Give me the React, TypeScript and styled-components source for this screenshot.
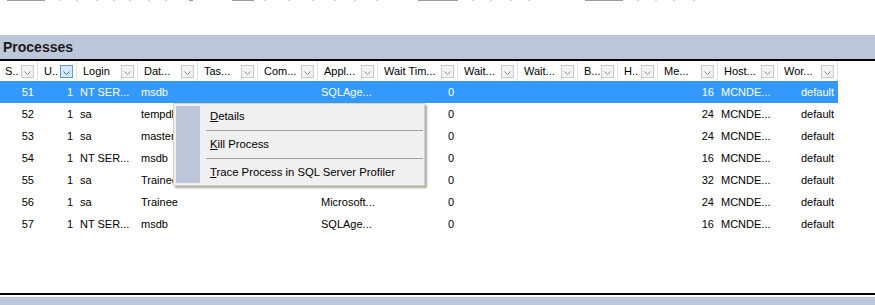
import styled, { createGlobalStyle } from 'styled-components';

const GlobalStyle = createGlobalStyle`
  html, body {
    margin: 0;
    padding: 0;
    background: #fff;
  }
  body {
    font-family: 'Liberation Sans', Arial, sans-serif;
  }
`;

const Page = styled.div`
  width: 875px;
  height: 305px;
  display: flex;
  flex-direction: column;
  overflow: hidden;
  background: #fff;
`;

const TopStrip = styled.div`
  height: 4px;
  display: flex;
  align-items: flex-start;
  overflow: hidden;
`;

const Mark = styled.span<{ $w: number; $gap: number; $dark?: boolean }>`
  width: ${(p) => p.$w}px;
  height: 1px;
  margin-left: ${(p) => p.$gap}px;
  background: ${(p) => (p.$dark ? '#9c9c9c' : '#d4d4d4')};
  flex: none;
`;

const TitleBar = styled.div`
  margin-top: 31px;
  height: 24px;
  padding-left: 3px;
  display: flex;
  align-items: center;
  background: #bcc8d9;
  border-bottom: 2px solid #000;
  font-size: 14px;
  font-weight: bold;
  color: #1b1b1b;
`;

const GridArea = styled.div`
  position: relative;
  height: 232px;
  flex: none;
`;

const Grid = styled.div`
  width: 838px;
  font-size: 11px;
  color: #000;
`;

const HeaderRow = styled.div`
  display: flex;
  height: 20px;
`;

const HeaderCell = styled.div<{ $w: number; $first?: boolean }>`
  width: ${(p) => p.$w}px;
  box-sizing: border-box;
  display: flex;
  align-items: center;
  padding-left: ${(p) => (p.$first ? 5 : 6)}px;
  border-right: 1px solid #e2e2e2;
`;

const HeaderLabel = styled.span`
  flex: 1;
  overflow: hidden;
  white-space: nowrap;
`;

const FilterBox = styled.span<{ $active?: boolean }>`
  width: 13px;
  height: 13px;
  box-sizing: border-box;
  margin-right: 3px;
  flex: none;
  display: flex;
  align-items: flex-end;
  justify-content: center;
  padding-bottom: 2px;
  border: 1px solid ${(p) => (p.$active ? '#5a9ad8' : '#cacaca')};
  background: ${(p) => (p.$active ? '#d6e9f9' : '#f3f3f3')};
`;

const Row = styled.div<{ $selected?: boolean }>`
  display: flex;
  height: 22px;
  background: ${(p) => (p.$selected ? '#3399ff' : 'transparent')};
  color: ${(p) => (p.$selected ? '#fff' : '#000')};
`;

const Cell = styled.div<{ $w: number; $align: 'left' | 'right' }>`
  width: ${(p) => p.$w}px;
  box-sizing: border-box;
  padding: 0 ${(p) => (p.$align === 'right' ? 4 : 3)}px;
  text-align: ${(p) => p.$align};
  line-height: 22px;
  white-space: nowrap;
  overflow: hidden;
`;

const Menu = styled.div`
  position: absolute;
  left: 173px;
  top: 42px;
  width: 252px;
  box-sizing: border-box;
  display: flex;
  padding: 2px 1px 2px 2px;
  background: #f0f0f0;
  border: 1px solid #dcd3bd;
  box-shadow: 2px 2px 2px rgba(0, 0, 0, 0.35);
`;

const Gutter = styled.div`
  width: 24px;
  flex: none;
  background: #bcc8d9;
`;

const MenuList = styled.div`
  flex: 1;
  display: flex;
  flex-direction: column;
`;

const MenuItem = styled.div`
  height: 21px;
  line-height: 21px;
  padding-left: 10px;
  font-size: 11.3px;
  color: #000;
  white-space: nowrap;
`;

const MenuSeparator = styled.div`
  height: 1px;
  margin: 3px 0 3px 6px;
  background: #a0a0a0;
`;

const BottomRule = styled.div`
  height: 2px;
  background: #000;
  margin-bottom: 2px;
  flex: none;
`;

const BottomBar = styled.div`
  flex: 1;
  background: #bcc8d9;
`;

type Align = 'left' | 'right';

const columns: { label: string; w: number; align: Align; active?: boolean }[] = [
  { label: 'S..', w: 38, align: 'right' },
  { label: 'U..', w: 39, align: 'right', active: true },
  { label: 'Login', w: 61, align: 'left' },
  { label: 'Dat...', w: 60, align: 'left' },
  { label: 'Tas...', w: 60, align: 'left' },
  { label: 'Com...', w: 60, align: 'left' },
  { label: 'Appl...', w: 60, align: 'left' },
  { label: 'Wait Tim...', w: 80, align: 'right' },
  { label: 'Wait...', w: 60, align: 'left' },
  { label: 'Wait...', w: 60, align: 'left' },
  { label: 'B...', w: 40, align: 'left' },
  { label: 'H..', w: 40, align: 'left' },
  { label: 'Me...', w: 60, align: 'right' },
  { label: 'Host...', w: 60, align: 'left' },
  { label: 'Wor...', w: 60, align: 'right' },
];

// application names of rows 52-55 sit under the context menu
const rows: string[][] = [
  ['51', '1', 'NT SER...', 'msdb', '', '', 'SQLAge...', '0', '', '', '', '', '16', 'MCNDE...', 'default'],
  ['52', '1', 'sa', 'tempdb', '', '', '', '0', '', '', '', '', '24', 'MCNDE...', 'default'],
  ['53', '1', 'sa', 'master', '', '', '', '0', '', '', '', '', '24', 'MCNDE...', 'default'],
  ['54', '1', 'NT SER...', 'msdb', '', '', '', '0', '', '', '', '', '16', 'MCNDE...', 'default'],
  ['55', '1', 'sa', 'Trainee', '', '', '', '0', '', '', '', '', '32', 'MCNDE...', 'default'],
  ['56', '1', 'sa', 'Trainee', '', '', 'Microsoft...', '0', '', '', '', '', '24', 'MCNDE...', 'default'],
  ['57', '1', 'NT SER...', 'msdb', '', '', 'SQLAge...', '0', '', '', '', '', '16', 'MCNDE...', 'default'],
];

const marks = [
  { w: 38, gap: 7, dark: true },
  { w: 2, gap: 14 },
  { w: 2, gap: 15 },
  { w: 2, gap: 18 },
  { w: 2, gap: 15 },
  { w: 2, gap: 14 },
  { w: 2, gap: 17 },
  { w: 2, gap: 15 },
  { w: 4, gap: 22, dark: true },
  { w: 22, gap: 39, dark: true },
  { w: 2, gap: 10 },
  { w: 2, gap: 22 },
  { w: 2, gap: 22 },
  { w: 2, gap: 20 },
  { w: 2, gap: 18 },
  { w: 2, gap: 20 },
  { w: 40, gap: 40, dark: true },
  { w: 2, gap: 14 },
  { w: 2, gap: 16 },
  { w: 2, gap: 18 },
  { w: 2, gap: 16 },
  { w: 38, gap: 55, dark: true },
  { w: 2, gap: 14 },
  { w: 2, gap: 16 },
  { w: 2, gap: 16 },
  { w: 2, gap: 18 },
];

function Chevron({ active }: { active?: boolean }) {
  return (
    <svg width="7" height="4" viewBox="0 0 7 4">
      <polyline
        points="0.5,0.5 3.5,3.5 6.5,0.5"
        fill="none"
        stroke={active ? '#2f6fb0' : '#8a8a8a'}
        strokeWidth="1"
      />
    </svg>
  );
}

export default function App() {
  return (
    <>
      <GlobalStyle />
      <Page>
        <TopStrip>
          {marks.map((m, i) => (
            <Mark key={i} $w={m.w} $gap={m.gap} $dark={m.dark} />
          ))}
        </TopStrip>
        <TitleBar>Processes</TitleBar>
        <GridArea>
          <Grid>
            <HeaderRow>
              {columns.map((c, i) => (
                <HeaderCell key={i} $w={c.w} $first={i === 0}>
                  <HeaderLabel>{c.label}</HeaderLabel>
                  <FilterBox $active={c.active}>
                    <Chevron active={c.active} />
                  </FilterBox>
                </HeaderCell>
              ))}
            </HeaderRow>
            {rows.map((r, ri) => (
              <Row key={ri} $selected={ri === 0}>
                {r.map((v, ci) => (
                  <Cell key={ci} $w={columns[ci].w} $align={columns[ci].align}>
                    {v}
                  </Cell>
                ))}
              </Row>
            ))}
          </Grid>
          <Menu>
            <Gutter />
            <MenuList>
              <MenuItem>
                <u>D</u>etails
              </MenuItem>
              <MenuSeparator />
              <MenuItem>
                <u>K</u>ill Process
              </MenuItem>
              <MenuSeparator />
              <MenuItem>
                <u>T</u>race Process in SQL Server Profiler
              </MenuItem>
            </MenuList>
          </Menu>
        </GridArea>
        <BottomRule />
        <BottomBar />
      </Page>
    </>
  );
}
